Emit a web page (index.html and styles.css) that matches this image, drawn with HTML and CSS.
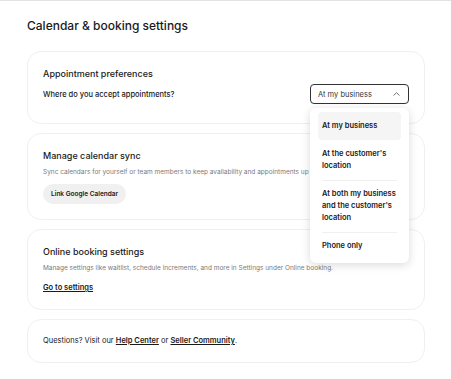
FILE: index.html
```html
<!DOCTYPE html>
<html lang="en">
<head>
  <meta charset="UTF-8" />
  <meta name="viewport" content="width=device-width, initial-scale=1.0"/>
  <title>Calendar &amp; booking settings</title>
  <link rel="stylesheet" href="styles.css">
</head>
<body>
  <div class="page">
    <h1>Calendar &amp; booking settings</h1>

    <div class="card card-top">
      <h2>Appointment preferences</h2>
      <div class="pref-row">
        <span class="question">Where do you accept appointments?</span>
        <div class="select-wrap">
          <div class="select">
            <span>At my business</span>
            <svg class="chevron" width="7" height="4" viewBox="0 0 7 4">
              <path d="M0.5 3.5 L3.5 0.7 L6.5 3.5" fill="none" stroke="#666" stroke-width="0.9"/>
            </svg>
          </div>
          <ul class="dropdown">
            <li class="active">At my business</li>
            <li>At the customer's location</li>
            <li>At both my business and the customer's location</li>
            <li>Phone only</li>
          </ul>
        </div>
      </div>
    </div>

    <div class="card">
      <h2>Manage calendar sync</h2>
      <p class="desc">Sync calendars for yourself or team members to keep availability and appointments up to date.</p>
      <button class="pill">Link Google Calendar</button>
    </div>

    <div class="card">
      <h2>Online booking settings</h2>
      <p class="desc">Manage settings like waitlist, schedule increments, and more in Settings under Online booking.</p>
      <a class="link" href="#">Go to settings</a>
    </div>

    <div class="card card-help">
      <p class="help">Questions? Visit our <a class="link" href="#">Help Center</a> or <a class="link" href="#">Seller Community</a>.</p>
    </div>
  </div>
</body>
</html>
```

FILE: styles.css
```css
body {
  font-family: Inter, "Noto Sans", Arial, sans-serif;
  background: #fff;
  color: #1a1a1a;
  margin: 0;
  padding: 0;
  border-top: 1px solid #e3e3e3;
}
.page {
  padding: 16px 26px 20px 27px;
}
h1 {
  margin: 0 0 16px;
  font-size: 12px;
  line-height: 18px;
  font-weight: 500;
}
.card {
  border: 1px solid #f0f0f0;
  border-radius: 14px;
  padding: 15px 15px 15px;
  margin-bottom: 9px;
  position: relative;
}
.card-top {
  z-index: 2;
  padding-bottom: 19px;
}
h2 {
  margin: 0;
  font-size: 9px;
  line-height: 14px;
  font-weight: 500;
}
.pref-row {
  display: flex;
  justify-content: space-between;
  align-items: center;
  margin-top: 3px;
}
.question {
  font-size: 7.5px;
  font-weight: 500;
}
.select-wrap {
  position: relative;
  margin-right: 0;
}
.select {
  width: 99px;
  height: 20px;
  box-sizing: border-box;
  border: 1px solid #333;
  border-radius: 4px;
  display: flex;
  align-items: center;
  justify-content: space-between;
  padding: 0 8px 0 7px;
  font-size: 7.5px;
  color: #333;
}
.dropdown {
  position: absolute;
  top: 24px;
  left: 0;
  width: 99px;
  box-sizing: border-box;
  margin: 0;
  padding: 4px 8px 3px;
  list-style: none;
  background: #fff;
  border-radius: 6px;
  box-shadow: 0 2px 10px rgba(0,0,0,0.15);
}
.dropdown li {
  font-size: 7.5px;
  line-height: 12px;
  font-weight: 600;
  padding: 8px 4px;
  position: relative;
}
.dropdown li + li:not(:nth-child(2))::before {
  content: "";
  position: absolute;
  top: 0;
  left: 4px;
  right: 4px;
  border-top: 1px solid #f0f0f0;
}
.dropdown li.active {
  background: #f5f5f5;
  border-radius: 4px;
}
.desc {
  margin: 3px 0 0;
  font-size: 6.5px;
  line-height: 12px;
  color: #7a7a7a;
  white-space: nowrap;
  overflow: hidden;
}
.pill {
  margin-top: 6px;
  height: 20px;
  padding: 0 8px;
  border: none;
  border-radius: 10px;
  background: #f0f0f0;
  font-family: inherit;
  font-size: 6.5px;
  font-weight: 600;
  color: #1a1a1a;
}
.link {
  color: #1a1a1a;
  font-weight: 600;
  text-decoration: underline;
}
.card .link {
  display: inline-block;
  margin-top: 7px;
  font-size: 7.5px;
  line-height: 12px;
}
.card-help {
  padding: 15px;
}
.help {
  margin: 0;
  font-size: 7.5px;
  line-height: 12px;
}
.help .link {
  display: inline;
  margin: 0;
}
```
